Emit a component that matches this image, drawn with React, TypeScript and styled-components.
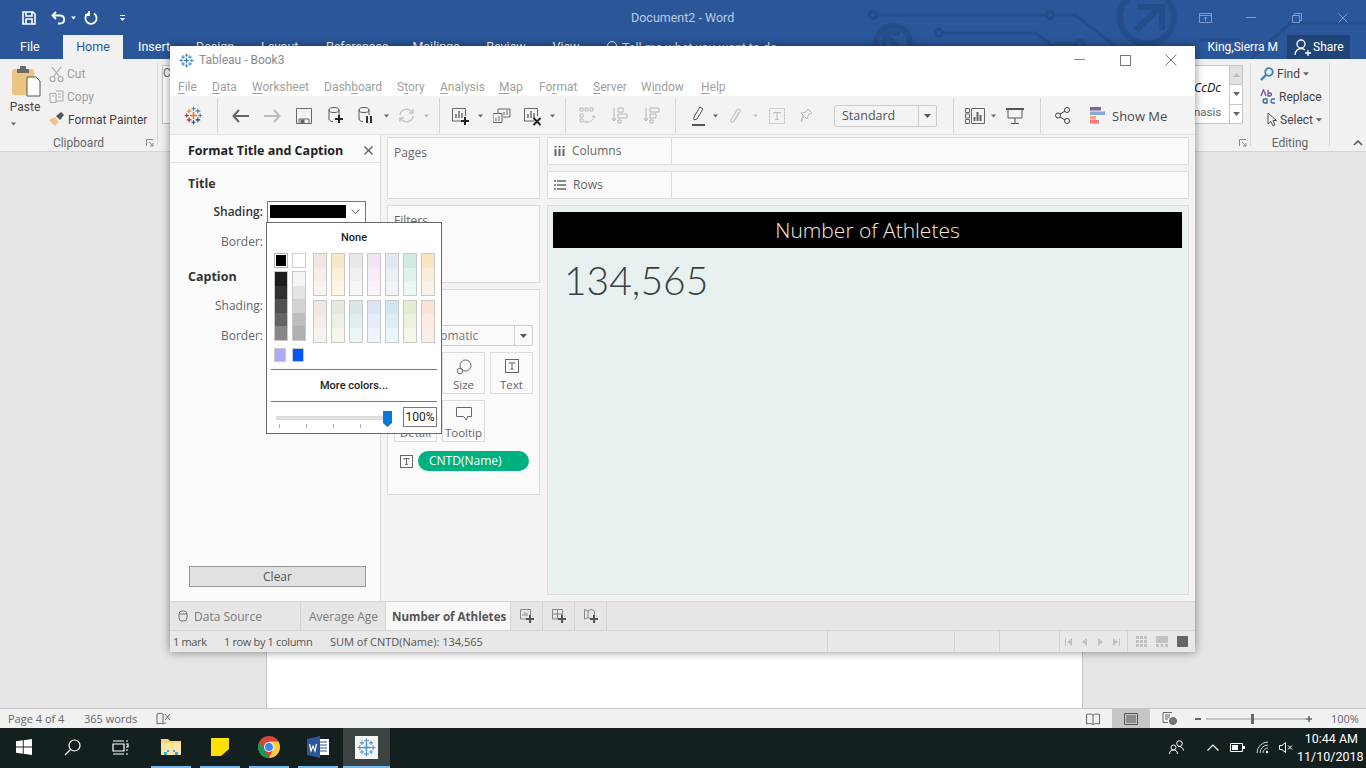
import React from 'react';
import styled, { createGlobalStyle } from 'styled-components';

const UI_FONT = '"Open Sans", "Liberation Sans", sans-serif';
const SEGOE_LIKE = 'Roboto, "Open Sans", sans-serif';

const GlobalStyle = createGlobalStyle`
  html, body {
    margin: 0;
    padding: 0;
    width: 1366px;
    height: 768px;
    overflow: hidden;
    background: #e6e6e6;
    font-family: ${UI_FONT};
  }
  * { box-sizing: border-box; }
`;

const Screen = styled.div`
  position: relative;
  width: 1366px;
  height: 768px;
  display: flex;
  flex-direction: column;
  overflow: hidden;
`;

const Svg = styled.svg`
  display: block;
  flex: none;
`;

/* ---------- word chrome ---------- */
const WordHead = styled.div`
  position: relative;
  flex: none;
  background: #2b579a;
  overflow: hidden;
`;
const WordTitleBar = styled.div`
  position: relative;
  height: 35px;
  display: flex;
  align-items: center;
  padding-left: 22px;
  color: #fff;
  font-family: ${SEGOE_LIKE};
`;
const CircuitArt = styled.svg`
  position: absolute;
  left: 0;
  top: 0;
`;
const Qat = styled.div`
  display: flex;
  align-items: center;
  width: 609px;
  height: 30px;
  flex: none;
`;
const DocTitle = styled.div`
  font-size: 12.5px;
  color: #bccbe2;
  margin-top: -1px;
`;
const WordControls = styled.div`
  margin-left: auto;
  display: flex;
  align-items: center;
`;
const WordControl = styled.div`
  width: 46px;
  display: flex;
  justify-content: center;
`;
const WordTabs = styled.div`
  position: relative;
  height: 24px;
  display: flex;
  align-items: stretch;
  font-family: ${SEGOE_LIKE};
  font-size: 12.5px;
  color: #fff;
  padding-left: 20px;
`;
const WordTab = styled.div<{ $w: number; $active?: boolean }>`
  width: ${p => p.$w}px;
  flex: none;
  text-align: center;
  line-height: 24px;
  background: ${p => (p.$active ? '#f1f1f1' : 'transparent')};
  color: ${p => (p.$active ? '#2b579a' : '#fff')};
`;
const TabSpacer = styled.div<{ $w: number }>`
  width: ${p => p.$w}px;
  flex: none;
`;
const TellMe = styled.div`
  display: flex;
  align-items: center;
  gap: 4px;
  white-space: nowrap;
  color: #dfe6f1;
`;
const WordUser = styled.div`
  margin-left: auto;
  line-height: 24px;
  padding-right: 9px;
  font-size: 12px;
`;
const ShareButton = styled.div`
  width: 63px;
  margin-right: 16px;
  background: #1f4478;
  display: flex;
  align-items: center;
  gap: 2px;
  padding-left: 7px;
  font-size: 12px;
`;
const Ribbon = styled.div`
  height: 93px;
  flex: none;
  background: #f1f1f1;
  border-bottom: 1px solid #d4d4d4;
  display: flex;
  color: #444;
  font-family: ${SEGOE_LIKE};
  font-size: 12px;
`;
const RibbonGroup = styled.div<{ $w?: number }>`
  position: relative;
  ${p => (p.$w ? `width: ${p.$w}px; flex: none;` : 'flex: 1;')}
  border-right: 1px solid #d8d8d8;
  margin: 4px 0 5px;
  display: flex;
`;
const GroupLabel = styled.div`
  position: absolute;
  left: 0;
  right: 0;
  bottom: -6px;
  text-align: center;
  color: #666;
  font-size: 12px;
  line-height: 18px;
`;
const Launcher = styled.div<{ $b?: number }>`
  position: absolute;
  right: 3px;
  bottom: ${p => p.$b ?? -1}px;
`;
const PasteColumn = styled.div`
  width: 49px;
  flex: none;
  padding: 3px 0 0 12px;
  color: #444;
`;
const PasteLabel = styled.div`
  margin: 0 0 0 -12px;
  width: 50px;
  text-align: center;
  line-height: 17px;
`;
const PasteCaret = styled.div`
  margin: 6px 0 0 -1px;
`;
const SmallCommands = styled.div`
  display: flex;
  flex-direction: column;
  margin-top: -1px;
`;
const SmallCommand = styled.div<{ $muted?: boolean }>`
  height: 23px;
  display: flex;
  align-items: center;
  gap: 3px;
  color: ${p => (p.$muted ? '#a0a0a0' : '#444')};
`;
const Gallery = styled.div`
  position: absolute;
  left: 4px;
  right: 7px;
  top: 2px;
  height: 59px;
  background: #fff;
  border: 1px solid #c6c6c6;
  color: #666;
`;
const GalleryRight = styled.div`
  position: absolute;
  right: 13px;
  top: 0;
  bottom: 0;
  width: 35px;
  text-align: left;
`;
const GalleryPreview = styled.div`
  font-family: ${UI_FONT};
  font-style: italic;
  font-size: 12.5px;
  color: #111;
  line-height: 18px;
  margin-top: 13px;
  width: 27px;
  white-space: nowrap;
  overflow: hidden;
`;
const GalleryName = styled.div`
  font-size: 11.5px;
  line-height: 16px;
  margin-top: 7px;
`;
const GalleryScroll = styled.div`
  position: absolute;
  right: 0;
  top: 0;
  bottom: 0;
  width: 13px;
  border-left: 1px solid #c6c6c6;
  display: flex;
  flex-direction: column;
`;
const ScrollCell = styled.div<{ $bg?: string }>`
  flex: 1;
  background: ${p => p.$bg || '#fff'};
  border-bottom: 1px solid #c6c6c6;
  display: flex;
  align-items: center;
  justify-content: center;
  &:last-child { border-bottom: 0; }
`;
const EditingStack = styled.div`
  display: flex;
  flex-direction: column;
  padding: 0 0 0 9px;
  margin-top: -1px;
`;
const RibbonEnd = styled.div`
  flex: none;
  width: 36px;
  position: relative;
`;
const DocArea = styled.div`
  flex: 1;
  background: #e6e6e6;
  padding-left: 266px;
`;
const Page = styled.div`
  width: 817px;
  height: 100%;
  background: #fff;
  border-left: 1px solid #c6c6c6;
  border-right: 1px solid #c6c6c6;
`;
const WordStatus = styled.div`
  height: 20px;
  flex: none;
  background: #f1f1f1;
  border-top: 1px solid #c6c6c6;
  display: flex;
  align-items: center;
  font-size: 11px;
  color: #666;
  padding-left: 8px;
`;
const StatusText = styled.div<{ $w: number }>`
  width: ${p => p.$w}px;
  flex: none;
`;
const ViewCell = styled.div<{ $active?: boolean; $w: number }>`
  width: ${p => p.$w}px;
  height: 100%;
  flex: none;
  display: flex;
  align-items: center;
  justify-content: center;
  background: ${p => (p.$active ? '#c6c6c6' : 'transparent')};
`;
const Zoom = styled.div`
  width: 117px;
  margin: 0 19px 0 7px;
  flex: none;
`;
const Taskbar = styled.div`
  height: 40px;
  flex: none;
  background: #14201f;
  display: flex;
  align-items: stretch;
  color: #fff;
`;
const TaskSlot = styled.div<{ $w: number; $open?: boolean; $active?: boolean }>`
  width: ${p => p.$w}px;
  flex: none;
  display: flex;
  align-items: center;
  justify-content: center;
  background: ${p => (p.$active ? '#3b4443' : 'transparent')};
  border-bottom: 2px solid ${p => (p.$open ? '#76b9ed' : 'transparent')};
`;
const TaskSpacer = styled.div`
  flex: 1;
`;
const Clock = styled.div`
  width: 69px;
  flex: none;
  font-family: ${SEGOE_LIKE};
  font-size: 12.5px;
  text-align: right;
  line-height: 18px;
  padding: 2px 8px 0 0;
  white-space: nowrap;
`;

/* ---------- tableau window ---------- */
const TableauWindow = styled.div`
  position: absolute;
  left: 170px;
  top: 46px;
  width: 1025px;
  height: 606px;
  background: #f3f3f3;
  box-shadow: 0 0 9px rgba(0, 0, 0, 0.45);
  display: flex;
  flex-direction: column;
  font-size: 12px;
  color: #555;
`;
const TbTitle = styled.div`
  height: 27px;
  flex: none;
  background: #fff;
  display: flex;
  align-items: center;
  padding: 1px 0 0 9px;
  gap: 5px;
  color: #8a8a8a;
  font-family: ${SEGOE_LIKE};
  font-size: 12px;
`;
const TbControls = styled.div`
  margin-left: auto;
  display: flex;
  align-items: center;
  padding-right: 1px;
`;
const TbControl = styled.div`
  width: 46px;
  display: flex;
  justify-content: center;
`;
const MenuBar = styled.div`
  height: 23px;
  flex: none;
  background: #fff;
  display: flex;
  align-items: center;
  padding: 4px 0 0 8px;
  color: #a0a0a0;
  font-family: ${SEGOE_LIKE};
  font-size: 12px;
`;
const MenuItem = styled.span<{ $w: number }>`
  width: ${p => p.$w}px;
  flex: none;
  u { text-underline-offset: 2px; }
`;
const Toolbar = styled.div`
  height: 39px;
  flex: none;
  display: flex;
  align-items: center;
  padding-top: 1px;
  background: #f3f3f3;
  border-bottom: 1px solid #e4e4e4;
`;
const Tool = styled.div<{ $w: number; $ml?: number }>`
  width: ${p => p.$w}px;
  margin-left: ${p => p.$ml || 0}px;
  flex: none;
  display: flex;
  align-items: center;
  justify-content: center;
`;
const ToolSep = styled.div<{ $ml?: number }>`
  width: 1px;
  height: 35px;
  flex: none;
  margin-left: ${p => p.$ml || 0}px;
  background: #d6d6d6;
`;
const StandardSelect = styled.div`
  width: 103px;
  height: 22px;
  margin-left: 14px;
  flex: none;
  border: 1px solid #ccc;
  border-radius: 2px;
  display: flex;
  align-items: center;
  padding-left: 7px;
  font-size: 12.5px;
  color: #555;
`;
const SelectCaret = styled.div`
  margin-left: auto;
  width: 18px;
  height: 100%;
  border-left: 1px solid #ccc;
  display: flex;
  align-items: center;
  justify-content: center;
`;
const ShowMe = styled.div`
  margin-left: 6px;
  font-size: 13px;
  color: #4a4a4a;
`;
const TbBody = styled.div`
  flex: 1;
  min-height: 0;
  position: relative;
  display: flex;
`;
const FormatPane = styled.div`
  width: 211px;
  flex: none;
  background: #fbfbfb;
  border-right: 1px solid #d9d9d9;
  display: flex;
  flex-direction: column;
  padding-bottom: 14px;
`;
const FormatHeader = styled.div`
  height: 28px;
  flex: none;
  border-bottom: 1px solid #e4e4e4;
  display: flex;
  align-items: center;
  justify-content: space-between;
  padding: 3px 7px 0 18px;
  font-size: 12.5px;
  font-weight: 700;
  color: #222;
`;
const SectionTitle = styled.div<{ $mt: number }>`
  margin: ${p => p.$mt}px 0 0 18px;
  font-size: 12.5px;
  font-weight: 700;
  line-height: 18px;
  color: #333;
`;
const FormatRow = styled.div<{ $mt: number }>`
  display: flex;
  align-items: center;
  margin-top: ${p => p.$mt}px;
  height: 21px;
`;
const FormatLabel = styled.div<{ $bold?: boolean }>`
  width: 93px;
  flex: none;
  text-align: right;
  font-weight: ${p => (p.$bold ? 600 : 400)};
  color: ${p => (p.$bold ? '#333' : '#666')};
`;
const ShadingSelect = styled.div`
  width: 99px;
  height: 22px;
  margin-left: 4px;
  background: #fff;
  border: 1px solid #777;
  display: flex;
  align-items: center;
  padding-left: 2px;
`;
const ShadingSwatch = styled.div`
  width: 76px;
  height: 13px;
  background: #000;
`;
const ChevronBox = styled.div`
  flex: 1;
  display: flex;
  justify-content: center;
`;
const ClearButton = styled.div`
  margin: auto 0 0 19px;
  width: 177px;
  height: 21px;
  background: #e1e1e1;
  border: 1px solid #999;
  text-align: center;
  line-height: 19px;
  color: #555;
`;
const ShelfColumn = styled.div`
  width: 153px;
  margin-left: 6px;
  flex: none;
  display: flex;
  flex-direction: column;
  gap: 6px;
  padding: 2px 0 0;
`;
const Card = styled.div<{ $h: number }>`
  height: ${p => p.$h}px;
  flex: none;
  background: #fafafa;
  border: 1px solid #dcdcdc;
  padding: 6px 6px;
  color: #666;
  position: relative;
`;
const CardTitle = styled.div`
  line-height: 18px;
`;
const MarkSelect = styled.div`
  margin-top: 11px;
  height: 21px;
  background: #fafafa;
  border: 1px solid #ccc;
  border-radius: 2px;
  display: flex;
  align-items: center;
  padding-left: 26px;
  color: #777;
`;
const MarkGrid = styled.div`
  display: grid;
  grid-template-columns: repeat(3, 43px);
  gap: 6px 5px;
  margin-top: 6px;
`;
const MarkButton = styled.div`
  height: 42px;
  border: 1px solid #dcdcdc;
  display: flex;
  flex-direction: column;
  align-items: center;
  justify-content: space-between;
  padding-top: 6px;
  font-size: 11.5px;
  line-height: 16px;
  color: #666;
`;
const PillRow = styled.div`
  display: flex;
  align-items: center;
  margin-top: 9px;
  padding-left: 6px;
  gap: 5px;
`;
const Pill = styled.div`
  width: 111px;
  height: 20px;
  border-radius: 10px;
  background: #00b180;
  color: #fff;
  line-height: 20px;
  padding-left: 11px;
  font-size: 12px;
`;
const ViewColumn = styled.div`
  flex: 1;
  min-width: 0;
  margin: 2px 6px 6px 7px;
  display: flex;
  flex-direction: column;
  gap: 6px;
`;
const ShelfBar = styled.div`
  height: 28px;
  flex: none;
  background: #fafafa;
  border: 1px solid #dcdcdc;
  display: flex;
  color: #666;
`;
const ShelfLabel = styled.div`
  width: 124px;
  flex: none;
  border-right: 1px solid #dcdcdc;
  display: flex;
  align-items: center;
  gap: 7px;
  padding: 0 0 1px 6px;
`;
const VizArea = styled.div`
  flex: 1;
  background: #e8f1ef;
  border: 1px solid #dcdcdc;
  padding: 6px 5px;
`;
const VizTitle = styled.div`
  height: 36px;
  width: 629px;
  background: #000;
  color: #f6ecdc;
  font-size: 21px;
  font-weight: 300;
  text-align: center;
  line-height: 37px;
`;
const BigNumber = styled.div`
  margin: 7px 0 0 11px;
  font-family: Lato, "Open Sans", sans-serif;
  font-size: 39px;
  font-weight: 300;
  color: #3a3f44;
  line-height: 50px;
`;
const SheetTabs = styled.div`
  height: 30px;
  flex: none;
  background: #e6e6e6;
  border-top: 1px solid #d6d6d6;
  border-bottom: 1px solid #d6d6d6;
  display: flex;
`;
const SheetTab = styled.div<{ $w: number; $active?: boolean }>`
  width: ${p => p.$w}px;
  flex: none;
  display: flex;
  align-items: center;
  gap: 6px;
  padding-left: ${p => (p.$active ? 6 : 8)}px;
  background: ${p => (p.$active ? '#f8f8f8' : 'transparent')};
  font-weight: ${p => (p.$active ? 700 : 400)};
  font-size: ${p => (p.$active ? 11.6 : 12)}px;
  color: ${p => (p.$active ? '#555' : '#7a7a7a')};
  border-right: 1px solid #d6d6d6;
  white-space: nowrap;
`;
const NewSheet = styled.div`
  width: 32px;
  flex: none;
  display: flex;
  align-items: center;
  justify-content: center;
  border-right: 1px solid #d6d6d6;
`;
const TbStatus = styled.div`
  height: 21px;
  flex: none;
  background: #e8e8e8;
  display: flex;
  align-items: center;
  font-size: 11px;
  color: #555;
  padding-left: 3px;
`;
const StatusCell = styled.div<{ $w: number }>`
  width: ${p => p.$w}px;
  height: 100%;
  flex: none;
  display: flex;
  align-items: center;
  border-right: 1px solid #d2d2d2;
`;
const StatusPlain = styled.div<{ $w: number; $tight?: boolean }>`
  width: ${p => p.$w}px;
  flex: none;
  letter-spacing: ${p => (p.$tight ? '-0.35px' : '0')};
`;
const PagerGroup = styled.div`
  width: 68px;
  height: 100%;
  flex: none;
  display: flex;
  align-items: center;
  justify-content: space-around;
  padding: 0 2px 0 0;
  border-right: 1px solid #d2d2d2;
`;
const FitGroup = styled.div`
  flex: 1;
  display: flex;
  align-items: center;
  justify-content: flex-start;
  gap: 9px;
  padding-left: 8px;
`;

/* ---------- colour popup ---------- */
const ColorPopup = styled.div`
  position: absolute;
  left: 96px;
  top: 87px;
  width: 176px;
  height: 212px;
  background: #fff;
  border: 1px solid #6a6a6a;
  display: flex;
  flex-direction: column;
  align-items: stretch;
  color: #222;
  font-family: ${SEGOE_LIKE};
  font-size: 11px;
  z-index: 5;
`;
const NoneLabel = styled.div`
  text-align: center;
  line-height: 16px;
  margin-top: 7px;
  font-weight: 500;
`;
const PaletteGrid = styled.div`
  display: flex;
  margin: 7px 0 0 7px;
`;
const GreyColumn = styled.div`
  width: 14px;
  display: flex;
  flex-direction: column;
  margin-right: 4px;
`;
const ColorChip = styled.div<{ $c: string; $selected?: boolean }>`
  width: 14px;
  height: 15px;
  background: ${p => p.$c};
  border: 1px solid ${p => (p.$selected ? '#b5b5b5' : '#d0d0d0')};
  box-shadow: ${p => (p.$selected ? 'inset 0 0 0 1px #fff' : 'none')};
`;
const Ramp = styled.div<{ $mt?: number }>`
  width: 14px;
  margin-top: ${p => p.$mt || 0}px;
  border: 1px solid #c9c9c9;
  display: flex;
  flex-direction: column;
`;
const RampStep = styled.div<{ $c: string; $h: number }>`
  height: ${p => p.$h}px;
  background: ${p => p.$c};
`;
const PaleBlock = styled.div`
  margin-left: 3px;
  display: flex;
  flex-direction: column;
  gap: 4px;
`;
const PaleRow = styled.div`
  display: flex;
  gap: 4px;
`;
const RecentRow = styled.div`
  display: flex;
  gap: 6px;
  margin: 5px 0 0 7px;
`;
const RecentChip = styled.div<{ $c: string }>`
  width: 12px;
  height: 14px;
  background: ${p => p.$c};
  border: 1px solid #c9c9c9;
`;
const PopupRule = styled.div<{ $mt: number }>`
  height: 1px;
  margin: ${p => p.$mt}px 4px 0;
  background: #777;
`;
const MoreColors = styled.div`
  text-align: center;
  line-height: 31px;
  font-weight: 500;
`;
const SliderRow = styled.div`
  position: relative;
  display: flex;
  align-items: center;
  height: 31px;
`;
const SliderTrack = styled.div`
  width: 112px;
  height: 4px;
  margin: 1px 0 0 9px;
  background: #e2e2e2;
  border: 1px solid #dadada;
`;
const SliderThumb = styled.svg`
  position: absolute;
  left: 116px;
  top: 9px;
`;
const SliderTicks = styled.svg`
  position: absolute;
  left: 12px;
  top: 22px;
`;
const OpacityBox = styled.div`
  margin-left: 15px;
  width: 34px;
  height: 20px;
  border: 1px solid #777;
  text-align: center;
  line-height: 18px;
  font-size: 12px;
`;

/* ---------- small drawings ---------- */
const Caret = ({ c = '#666', w = 7 }: { c?: string; w?: number }) => (
  <Svg width={w} height={4} viewBox="0 0 7 4"><path d="M0 0h7L3.5 4z" fill={c} /></Svg>
);

const TableauMark = ({ size, colored, c = '#3b7fb8' }: { size: number; colored?: boolean; c?: string }) => {
  const arm = [
    [12, 12, 4.4, colored ? '#e8762c' : c],
    [12, 3.5, 2.6, colored ? '#5b7fa6' : c],
    [12, 20.5, 2.6, colored ? '#1f4f82' : c],
    [3.5, 12, 2.6, colored ? '#c72037' : c],
    [20.5, 12, 2.6, colored ? '#5b879b' : c],
    [6.5, 6.5, 3, colored ? '#eb912b' : c],
    [17.5, 6.5, 3, colored ? '#59879b' : c],
    [6.5, 17.5, 3, colored ? '#c72037' : c],
    [17.5, 17.5, 3, colored ? '#1f457e' : c],
  ] as [number, number, number, string][];
  return (
    <Svg width={size} height={size} viewBox="0 0 24 24">
      {arm.map(([x, y, r, col], i) => (
        <path key={i} d={`M${x - r} ${y}H${x + r}M${x} ${y - r}V${y + r}`} stroke={col} strokeWidth={i === 0 ? 2 : 1.5} fill="none" />
      ))}
    </Svg>
  );
};

const Stroke = ({ w, h, vb, c = '#666', sw = 1, children }: { w: number; h: number; vb?: string; c?: string; sw?: number; children: React.ReactNode }) => (
  <Svg width={w} height={h} viewBox={vb || `0 0 ${w} ${h}`} fill="none" stroke={c} strokeWidth={sw}>{children}</Svg>
);

const Plus = ({ x, y, c = '#222' }: { x: number; y: number; c?: string }) => (
  <path d={`M${x - 4} ${y}h8M${x} ${y - 4}v8`} stroke={c} strokeWidth={2} />
);

const SheetIcon = ({ c = '#666', plus, cross }: { c?: string; plus?: boolean; cross?: boolean }) => (
  <Stroke w={20} h={20} c={c}>
    <path d="M12 15H2.5V2.5h13V10" />
    <path d="M6 12V8M9 12V5M12 12V7" strokeWidth={1.4} />
    {plus && <Plus x={15} y={15} />}
    {cross && <path d="M11.5 12l7 7M18.5 12l-7 7" stroke="#222" strokeWidth={2} />}
  </Stroke>
);

const TBox = ({ size = 14, c = '#666', dashed }: { size?: number; c?: string; dashed?: boolean }) => (
  <Stroke w={size} h={size} c={c}>
    <rect x=".5" y=".5" width={size - 1} height={size - 1} strokeDasharray={dashed ? '2 1' : undefined} />
    <path d={`M${size * 0.3} ${size * 0.35}v-1h${size * 0.4}v1M${size / 2} ${size * 0.3}v${size * 0.42}M${size * 0.38} ${size * 0.72}h${size * 0.24}`} />
  </Stroke>
);

const PALE_TOP = [
  ['#f1e6e0', '#f6eeea', '#f7f4f2'], ['#f8e9c6', '#fbf0d8', '#fdf6e6'], ['#e8e8e8', '#f0f0f0', '#f6f6f6'],
  ['#f3e4f3', '#f7ecf7', '#faf4fa'], ['#e0e9ef', '#eaeff3', '#f1f5f7'], ['#d0ebe6', '#e0f1ee', '#edf8f5'],
  ['#fae5c2', '#faeeda', '#f9f2e8'],
];
const PALE_BOTTOM = [
  ['#f2e6e2', '#f6ecea', '#faf2f0'], ['#e6eadb', '#edf0e4', '#f4f6ea'], ['#d8e6e6', '#e2eeee', '#eaf7f6'],
  ['#dde5f5', '#e6ecf8', '#eef3fc'], ['#cfe7f2', '#ddeff6', '#e8f5fa'], ['#e3eed0', '#ecf2dc', '#f4f7e8'],
  ['#fde3d3', '#fdeae0', '#faefe8'],
];
const DARKS = ['#1c1c1c', '#303030', '#505050', '#646464', '#868686'];
const LIGHTS = ['#f4f4f4', '#e4e4e4', '#d2d2d2', '#bdbdbd', '#b0b0b0'];

const MENU: [string, string, string, number][] = [
  ['', 'F', 'ile', 34], ['', 'D', 'ata', 40], ['', 'W', 'orksheet', 72], ['Dash', 'b', 'oard', 73],
  ['S', 't', 'ory', 43], ['', 'A', 'nalysis', 59], ['', 'M', 'ap', 40], ['Fo', 'r', 'mat', 54],
  ['', 'S', 'erver', 48], ['Wi', 'n', 'dow', 60], ['', 'H', 'elp', 40],
];

const ColorPicker = () => (
  <ColorPopup>
    <NoneLabel>None</NoneLabel>
    <PaletteGrid>
      <GreyColumn>
        <ColorChip $c="#000" $selected />
        <Ramp $mt={3}>{DARKS.map(c => <RampStep key={c} $c={c} $h={13.6} />)}</Ramp>
      </GreyColumn>
      <GreyColumn>
        <ColorChip $c="#fff" />
        <Ramp $mt={3}>{LIGHTS.map(c => <RampStep key={c} $c={c} $h={13.6} />)}</Ramp>
      </GreyColumn>
      <PaleBlock>
        {[PALE_TOP, PALE_BOTTOM].map((rows, r) => (
          <PaleRow key={r}>
            {rows.map((steps, i) => (
              <Ramp key={i}>{steps.map(c => <RampStep key={c} $c={c} $h={13.6} />)}</Ramp>
            ))}
          </PaleRow>
        ))}
      </PaleBlock>
    </PaletteGrid>
    <RecentRow>
      <RecentChip $c="#aaaaff" />
      <RecentChip $c="#0055ff" />
    </RecentRow>
    <PopupRule $mt={7} />
    <MoreColors>More colors...</MoreColors>
    <PopupRule $mt={0} />
    <SliderRow>
      <SliderTrack />
      <SliderTicks width={90} height={6}>
        {[0, 27, 54, 81].map(x => <rect key={x} x={x} y={0} width={1} height={4} fill="#aaa" />)}
      </SliderTicks>
      <SliderThumb width={9} height={16} viewBox="0 0 9 16"><path d="M0 0h9v12l-4.5 4L0 12z" fill="#0a78d7" /></SliderThumb>
      <OpacityBox>100%</OpacityBox>
    </SliderRow>
  </ColorPopup>
);

function TableauMarkInner() {
  return (
    <g fill="none" stroke="#5b93c4" strokeWidth={1.3}>
      <path d="M7 12h10M12 7v10" stroke="#4a90c8" strokeWidth={1.8} />
      <path d="M9 4h6M12 1v6M9 20h6M12 17v6M1 12h6M4 9v6M17 12h6M20 9v6M4 6.5h5M6.5 4v5M15 6.5h5M17.5 4v5M4 17.5h5M6.5 15v5M15 17.5h5M17.5 15v5" />
    </g>
  );
}

const WordChrome = () => (
  <>
    <WordHead>
      <CircuitArt width={1366} height={59} viewBox="0 0 1366 59" fill="none" stroke="#254d8b" strokeWidth={3}>
        <circle cx="873" cy="15" r="3.5" />
        <circle cx="1050" cy="15" r="3.5" />
        <path d="M877 15h170M1054 15h21l60 46" />
        <circle cx="939" cy="33" r="3.5" />
        <circle cx="1080" cy="44" r="3.5" />
        <path d="M943 33h93l18 14M1054 44h22" />
        <circle cx="893" cy="43" r="17" strokeWidth={6} />
        <path d="M884 33l18 18M884 49V33h16" strokeWidth={5} />
        <circle cx="1147" cy="17" r="27" strokeWidth={6} />
        <path d="M1136 30l25-24M1137 7h25v23" strokeWidth={6} />
        <path d="M1250 60l40-37h76M1200 40h40" />
      </CircuitArt>
      <WordTitleBar>
        <Qat>
          <Stroke w={14} h={14} c="#fff" sw={1.6}>
            <path d="M1 1h10l2 2v10H1z" /><path d="M4 1v4h6V1M4 13V8h6v5" />
          </Stroke>
          <TabSpacer $w={15} />
          <Stroke w={15} h={14} c="#fff" sw={1.8}><path d="M5 1L1.5 4.5 5 8M2 4.5h7c5.5 0 5.5 8 0 8H7" /></Stroke>
          <TabSpacer $w={5} />
          <Caret c="#fff" w={5} />
          <TabSpacer $w={8} />
          <Stroke w={14} h={14} c="#fff" sw={1.8}><path d="M10 2.5a5.6 5.6 0 1 1-6 0M5 0v4H1" /></Stroke>
          <TabSpacer $w={21} />
          <Stroke w={7} h={7} c="#fff"><path d="M1 1.5h5" /><path d="M1 4h5L3.5 7z" fill="#fff" stroke="none" /></Stroke>
        </Qat>
        <DocTitle>Document2 - Word</DocTitle>
        <WordControls>
          <WordControl>
            <Stroke w={13} h={10} c="#7f9ccb"><path d="M.5.5h12v9H.5zM.5 2.5h12M6.5 8V4M5 5.5L6.5 4 8 5.5" /></Stroke>
          </WordControl>
          <WordControl>
            <Stroke w={10} h={2} c="#7f9ccb"><path d="M0 .5h10" /></Stroke>
          </WordControl>
          <WordControl>
            <Stroke w={10} h={10} c="#7f9ccb"><path d="M.5 2.5h7v7h-7zM2.5 2.5v-2h7v7h-2" /></Stroke>
          </WordControl>
          <WordControl>
            <Stroke w={10} h={10} c="#7f9ccb"><path d="M.5.5l9 9M9.5.5l-9 9" /></Stroke>
          </WordControl>
        </WordControls>
      </WordTitleBar>
      <WordTabs>
        <WordTab $w={18}>File</WordTab>
        <TabSpacer $w={25} />
        <WordTab $w={60} $active>Home</WordTab>
        <TabSpacer $w={15} />
        <WordTab $w={32}>Insert</WordTab>
        <TabSpacer $w={26} />
        <WordTab $w={37}>Design</WordTab>
        <TabSpacer $w={28} />
        <WordTab $w={37}>Layout</WordTab>
        <TabSpacer $w={28} />
        <WordTab $w={60}>References</WordTab>
        <TabSpacer $w={26} />
        <WordTab $w={48}>Mailings</WordTab>
        <TabSpacer $w={26} />
        <WordTab $w={40}>Review</WordTab>
        <TabSpacer $w={26} />
        <WordTab $w={28}>View</WordTab>
        <TabSpacer $w={26} />
        <TellMe>
          <Stroke w={12} h={12} c="#fff"><circle cx="6" cy="5" r="4.5" /><path d="M3 9l-2 3" /></Stroke>
          Tell me what you want to do
        </TellMe>
        <WordUser>King,Sierra M</WordUser>
        <ShareButton>
          <Stroke w={17} h={17} c="#fff" sw={1.3}><circle cx="7" cy="5" r="4" /><path d="M1 16c0-4 3-6.5 6-6.5 2 0 3 .5 4 1.5M11 14h6M14 11v6" /></Stroke>
          Share
        </ShareButton>
      </WordTabs>
    </WordHead>
    <Ribbon>
      <RibbonGroup $w={158}>
        <PasteColumn>
          <Svg width={29} height={33} viewBox="0 0 29 33">
            <rect x="0" y="3" width="22" height="26" rx="2" fill="#ecc57f" />
            <path d="M8 3h6V0H8zM5 3h12v4H5z" fill="#6a6a6a" />
            <path d="M15 11h9l4 4v15H15z" fill="#fff" stroke="#555" />
          </Svg>
          <PasteLabel>Paste</PasteLabel>
          <PasteCaret><Caret c="#666" w={5} /></PasteCaret>
        </PasteColumn>
        <SmallCommands>
          <SmallCommand $muted>
            <Stroke w={15} h={16} c="#a8a8a8" sw={1.2}><path d="M3 1l7 9M12 1L5 10" /><circle cx="3.5" cy="13" r="2.5" /><circle cx="11.5" cy="13" r="2.5" /></Stroke>
            Cut
          </SmallCommand>
          <SmallCommand $muted>
            <Stroke w={15} h={14} c="#a8a8a8"><path d="M7 3.5H1v9h6zM7 1h7v10H7M3 6h2M9 4h3M9 7h3" /></Stroke>
            Copy
          </SmallCommand>
          <SmallCommand>
            <Svg width={16} height={15} viewBox="0 0 16 15"><path d="M0 8l6-3 4 5-4 4z" fill="#e9c98a" /><path d="M7 4l5-4 3 3-4 5z" fill="#555" /></Svg>
            Format Painter
          </SmallCommand>
        </SmallCommands>
        <GroupLabel>Clipboard</GroupLabel>
        <Launcher>
          <Stroke w={8} h={8} c="#888"><path d="M.5 7V.5H7M3 3l4 4M7 4v3H4" /></Stroke>
        </Launcher>
      </RibbonGroup>
      <RibbonGroup>
        <Gallery>
          C
          <GalleryRight>
            <GalleryPreview>CcDc</GalleryPreview>
            <GalleryName>nasis</GalleryName>
          </GalleryRight>
          <GalleryScroll>
            <ScrollCell $bg="#e1e1e1">
              <Svg width={7} height={4} viewBox="0 0 7 4"><path d="M0 4h7L3.5 0z" fill="#bbb" /></Svg>
            </ScrollCell>
            <ScrollCell><Caret c="#666" /></ScrollCell>
            <ScrollCell><Caret c="#666" /></ScrollCell>
          </GalleryScroll>
        </Gallery>
        <Launcher>
          <Stroke w={8} h={8} c="#888"><path d="M.5 7V.5H7M3 3l4 4M7 4v3H4" /></Stroke>
        </Launcher>
      </RibbonGroup>
      <RibbonGroup $w={79}>
        <EditingStack>
          <SmallCommand>
            <Stroke w={14} h={14} c="#3f7fbf" sw={1.8}><circle cx="9" cy="5" r="3.8" /><path d="M6 8l-5 5" strokeWidth={2.4} /></Stroke>
            Find <Caret c="#666" w={6} />
          </SmallCommand>
          <SmallCommand>
            <Svg width={16} height={16} viewBox="0 0 16 16">
              <path d="M1 7l2.5-6L6 7" fill="none" stroke="#7b4fa0" strokeWidth={1.3} />
              <path d="M8 1v6h2a1.5 1.5 0 0 0 0-3H8" fill="none" stroke="#7b4fa0" strokeWidth={1.3} />
              <path d="M5 10a2 2 0 1 0 0 4h2v-4zM15 10h-2a2 2 0 0 0 0 4h2" fill="none" stroke="#2f6ea8" strokeWidth={1.3} />
            </Svg>
            Replace
          </SmallCommand>
          <SmallCommand>
            <TabSpacer $w={4} />
            <Stroke w={10} h={15} c="#555"><path d="M1 1v11l3-2.5 2 4.5 2-1-2-4.5h3.5z" /></Stroke>
            Select <Caret c="#666" w={6} />
          </SmallCommand>
        </EditingStack>
        <GroupLabel>Editing</GroupLabel>
      </RibbonGroup>
      <RibbonEnd>
        <Launcher $b={5}>
          <Stroke w={10} h={6} c="#555" sw={1.6}><path d="M1 5l4-4 4 4" /></Stroke>
        </Launcher>
      </RibbonEnd>
    </Ribbon>
    <DocArea><Page /></DocArea>
    <WordStatus>
      <StatusText $w={76}>Page 4 of 4</StatusText>
      <StatusText $w={72}>365 words</StatusText>
      <Stroke w={15} h={14} c="#666"><path d="M7 2C5 1 3 1 1 2v10c2-1 4-1 6 0 1-.8 2-1 3-1M7 2v10M9 2l5 6M14 2l-5 6" /></Stroke>
      <TaskSpacer />
      <ViewCell $w={38}>
        <Stroke w={14} h={12} c="#666"><path d="M7 2C5 .8 3 .8 .5 1.5V11C3 10.3 5 10.3 7 11.5c2-1.2 4-1.2 6.5-.5V1.5C11 .8 9 .8 7 2zM7 2v9.5" /></Stroke>
      </ViewCell>
      <ViewCell $w={38} $active>
        <Stroke w={14} h={12} c="#555"><path d="M.5.5h13v11H.5zM2 3h10M2 5h10M2 7h10M2 9h10" /></Stroke>
      </ViewCell>
      <ViewCell $w={38}>
        <Stroke w={15} h={13} c="#666"><path d="M10 .5H1v10h5M3 3h5M3 5h5M3 7h3" /><circle cx="11" cy="9" r="3.5" fill="#777" /></Stroke>
      </ViewCell>
      <Zoom>
        <Svg width={117} height={12} viewBox="0 0 117 12">
          <path d="M0 6h6" stroke="#666" strokeWidth={2} />
          <path d="M11 6h100" stroke="#999" />
          <rect x="56" y="1" width="3" height="10" fill="#666" />
          <path d="M111 6h6M114 3v6" stroke="#666" strokeWidth={1.6} />
        </Svg>
      </Zoom>
      <StatusText $w={35}>100%</StatusText>
    </WordStatus>
    <Taskbar>
      <TaskSlot $w={48}>
        <Svg width={16} height={16} viewBox="0 0 16 16"><path d="M0 2.3L6.8 1.3V7.5H0zM7.7 1.2L16 0V7.5H7.7zM0 8.4H6.8V14.7L0 13.7zM7.7 8.4H16V16L7.7 14.8z" fill="#fff" /></Svg>
      </TaskSlot>
      <TaskSlot $w={48}>
        <Stroke w={17} h={17} c="#fff" sw={1.2}><circle cx="10.5" cy="6.5" r="5.5" /><path d="M6.5 10.5L1 16" /></Stroke>
      </TaskSlot>
      <TaskSlot $w={48}>
        <Stroke w={17} h={15} c="#fff" sw={1.2}><path d="M1 4h11v7H1zM1 1h11M1 14h11M14 4h2v3h-2M14 1h2M14 14h2M14 10h2" /></Stroke>
      </TaskSlot>
      <TaskSlot $w={7} />
      <TaskSlot $w={40} $open>
        <Svg width={22} height={18} viewBox="0 0 22 18">
          <path d="M1 1h7l2 2h11v14H1z" fill="#f6d675" />
          <path d="M1 5h20v12H1z" fill="#fbe6a4" />
          <path d="M7 12h8v5H7zM4 17h14v-3H4z" fill="#3fa9dc" />
          <path d="M9 12h4v3H9z" fill="#fbe6a4" />
        </Svg>
      </TaskSlot>
      <TaskSlot $w={9} />
      <TaskSlot $w={40} $open>
        <Svg width={18} height={18} viewBox="0 0 18 18"><path d="M0 0h18v18H0z" fill="#ffe100" /><path d="M10 18l8-7v7z" fill="#222" /></Svg>
      </TaskSlot>
      <TaskSlot $w={9} />
      <TaskSlot $w={40} $open>
        <Svg width={22} height={22} viewBox="0 0 22 22">
          <circle cx="11" cy="11" r="11" fill="#db4437" />
          <path d="M11 22a11 11 0 0 1-9.5-16.5L6.5 14l4.5 8z" fill="#0f9d58" />
          <path d="M11 22a11 11 0 0 0 9.5-16.5H11l4 8z" fill="#ffcd40" />
          <circle cx="11" cy="11" r="5" fill="#fff" />
          <circle cx="11" cy="11" r="4" fill="#4285f4" />
        </Svg>
      </TaskSlot>
      <TaskSlot $w={9} />
      <TaskSlot $w={40} $open>
        <Svg width={22} height={22} viewBox="0 0 22 22">
          <path d="M9 3h13v16H9z" fill="#fff" />
          <path d="M13 6h7M13 9h7M13 12h7M13 15h7" stroke="#2b579a" />
          <path d="M0 3l13-3v22L0 19z" fill="#2b579a" />
          <path d="M2.5 8L4 15l2-5 2 5 1.5-7" stroke="#fff" fill="none" strokeWidth={1.2} />
        </Svg>
      </TaskSlot>
      <TaskSlot $w={5} />
      <TaskSlot $w={47} $open $active>
        <Svg width={23} height={23} viewBox="0 0 23 23">
          <rect width="23" height="23" fill="#f3f5f7" />
          <g transform="translate(1.5 1.5) scale(.83)"><TableauMarkInner /></g>
        </Svg>
      </TaskSlot>
      <TaskSpacer />
      <TaskSlot $w={28}>
        <Stroke w={15} h={15} c="#fff"><circle cx="10.5" cy="3.5" r="2.8" /><circle cx="4.5" cy="7.5" r="2.5" /><path d="M.5 14c0-3 2-4 4-4s4 1 4 4M9 6.5c3 0 5 1 5.5 4" /></Stroke>
      </TaskSlot>
      <TaskSlot $w={11} />
      <TaskSlot $w={24}>
        <Stroke w={12} h={7} c="#fff" sw={1.2}><path d="M.5 6.5L6 1l5.5 5.500" /></Stroke>
      </TaskSlot>
      <TaskSlot $w={24}>
        <Svg width={15} height={9} viewBox="0 0 15 9"><path d="M.5.5h12v8H.5z" fill="none" stroke="#fff" /><path d="M2 2h6v5H2zM13 3h2v3h-2z" fill="#fff" /></Svg>
      </TaskSlot>
      <TaskSlot $w={26}>
        <Stroke w={13} h={13} c="#cfd3d3"><path d="M1 12A11 11 0 0 1 12 1M4 12a8 8 0 0 1 8-8M7 12a5 5 0 0 1 5-5" /><circle cx="11" cy="11" r="1.2" fill="#fff" stroke="none" /></Stroke>
      </TaskSlot>
      <TaskSlot $w={22}>
        <Stroke w={14} h={11} c="#fff"><path d="M.5 3.5H3L6.5.5v10L3 7.5H.5zM9 3.5l4 4M13 3.500l-4 4" /></Stroke>
      </TaskSlot>
      <Clock>10:44 AM<br />11/10/2018</Clock>
    </Taskbar>
  </>
);

const TableauApp = () => (
  <TableauWindow>
    <TbTitle>
      <TableauMark size={15} />
      Tableau - Book3
      <TbControls>
        <TbControl><Stroke w={11} h={2} c="#888"><path d="M0 .5h11" /></Stroke></TbControl>
        <TbControl><Stroke w={11} h={11} c="#777"><rect x=".5" y=".5" width="10" height="10" /></Stroke></TbControl>
        <TbControl><Stroke w={12} h={12} c="#777"><path d="M.5.5l11 11M11.5.5l-11 11" /></Stroke></TbControl>
      </TbControls>
    </TbTitle>
    <MenuBar>
      {MENU.map(([a, u, b, w]) => (
        <MenuItem key={a + u + b} $w={w}>{a}<u>{u}</u>{b}</MenuItem>
      ))}
    </MenuBar>
    <Toolbar>
      <Tool $w={47}><TableauMark size={19} colored /></Tool>
      <ToolSep />
      <Tool $w={32} $ml={6}>
        <Stroke w={17} h={14} c="#666" sw={2}><path d="M7 1L1.5 7 7 13M2 7h15" /></Stroke>
      </Tool>
      <Tool $w={32}>
        <Stroke w={17} h={14} c="#bbb" sw={2}><path d="M10 1l5.5 6L10 13M15 7H0" /></Stroke>
      </Tool>
      <Tool $w={32}>
        <Stroke w={16} h={16} c="#666"><path d="M.5.5h15v15H.5zM3 15v-4h10v4" /><rect x="5" y="12" width="3" height="3" fill="#666" /></Stroke>
      </Tool>
      <Tool $w={32}>
        <Stroke w={16} h={17} c="#555">
          <ellipse cx="6" cy="3" rx="5" ry="2.5" /><path d="M1 3v9c0 1.5 2 2.5 4 2.5M11 3v6" /><Plus x={11} y={12} />
        </Stroke>
      </Tool>
      <Tool $w={28}>
        <Stroke w={16} h={17} c="#555">
          <ellipse cx="6" cy="3" rx="5" ry="2.5" /><path d="M1 3v9c0 1.5 2 2.5 4 2.5M11 3v5" />
          <path d="M9 9v7M13 9v7" stroke="#333" strokeWidth={2} />
        </Stroke>
      </Tool>
      <Tool $w={12}><Caret w={5} /></Tool>
      <Tool $w={28}>
        <Stroke w={17} h={15} c="#c4c4c4" sw={1.4}><path d="M2 7a6.5 6.5 0 0 1 11-4l2 2M15 8a6.5 6.5 0 0 1-11 4l-2-2M15 1v4h-4M2 14v-4h4" /></Stroke>
      </Tool>
      <Tool $w={12}><Caret c="#bbb" w={5} /></Tool>
      <ToolSep $ml={7} />
      <Tool $w={28} $ml={6}><SheetIcon plus /></Tool>
      <Tool $w={12}><Caret w={5} /></Tool>
      <Tool $w={28} $ml={2}>
        <Stroke w={18} h={16} c="#666"><path d="M5 5V1h12v8h-7M0 5.5h9v9H0zM11 7V4M14 7V2M3 13v-3M6 13V8" /></Stroke>
      </Tool>
      <Tool $w={28} $ml={2}><SheetIcon cross /></Tool>
      <Tool $w={12}><Caret w={5} /></Tool>
      <ToolSep $ml={7} />
      <Tool $w={28} $ml={7}>
        <Stroke w={17} h={18} c="#bbb"><path d="M1 1h3v3H1zM6 1h3v3H6zM11 1h3v3h-3zM1 7h3v3H1zM1 12h3v3H1zM7 15c4 1 8-2 8-6M5 14l2 1.5 1-2M13 10l2-1.5 1.5 2" /></Stroke>
      </Tool>
      <Tool $w={28} $ml={4}>
        <Stroke w={17} h={17} c="#b4b4b4"><path d="M3 1v12M1 11l2 3 2-3M7 1h5v4H7zM7 7h9v4H7zM7 13h3v3H7z" /></Stroke>
      </Tool>
      <Tool $w={28} $ml={4}>
        <Stroke w={17} h={17} c="#b4b4b4"><path d="M3 1v12M1 11l2 3 2-3M7 1h9v4H7zM7 7h6v4H7zM7 13h3v3H7z" /></Stroke>
      </Tool>
      <ToolSep $ml={10} />
      <Tool $w={28} $ml={8}>
        <Stroke w={13} h={20} c="#555"><path d="M8 1l3 2-6 10-3 1 0-3z" /><path d="M0 19h13" strokeWidth={2} /></Stroke>
      </Tool>
      <Tool $w={6}><Caret w={5} /></Tool>
      <Tool $w={28} $ml={3}>
        <Stroke w={13} h={18} c="#c4c4c4" sw={1.2}><path d="M10 5L5 14c-1 2-4 1-3-1L8 3c1.500-2 4-.5 3 1.500L6 13" /></Stroke>
      </Tool>
      <Tool $w={12}><Caret c="#c4c4c4" w={5} /></Tool>
      <Tool $w={28} $ml={2}><TBox size={16} c="#bbb" dashed /></Tool>
      <Tool $w={28} $ml={1}>
        <Stroke w={13} h={16} c="#bbb"><path d="M8 1l4 4-3 1-2 5-3-3-3 6 2-7-2-2 5-1z" /></Stroke>
      </Tool>
      <StandardSelect>
        Standard
        <SelectCaret><Caret w={7} c="#555" /></SelectCaret>
      </StandardSelect>
      <ToolSep $ml={16} />
      <Tool $w={28} $ml={7}>
        <Stroke w={20} h={16} c="#666"><path d="M.5.5h4v4h-4zM.5 6h4v4h-4zM.5 11.5h4v4h-4zM6.5.5h13v15h-13z" /><path d="M9.5 13V9M12.5 13V4M15.500 13V7" strokeWidth={2} /></Stroke>
      </Tool>
      <Tool $w={8}><Caret w={5} /></Tool>
      <Tool $w={28} $ml={4}>
        <Stroke w={18} h={16} c="#555"><path d="M0 1h18" strokeWidth={2} /><path d="M2 1v9h14V1M9 10v5M5 15.5h8" /></Stroke>
      </Tool>
      <ToolSep $ml={11} />
      <Tool $w={28} $ml={7}>
        <Stroke w={15} h={17} c="#444"><circle cx="3" cy="8.5" r="2.5" /><circle cx="12" cy="3" r="2.5" /><circle cx="12" cy="14" r="2.5" /><path d="M5 7l5-3M5 10l5 3" /></Stroke>
      </Tool>
      <Tool $w={16} $ml={14}>
        <Svg width={16} height={17} viewBox="0 0 16 17">
          <rect y="0" width="11" height="3.5" fill="#7b6699" />
          <rect y="4.5" width="15" height="3.5" fill="#86a9cf" />
          <rect y="9" width="6" height="3.5" fill="#f2a77b" />
          <rect y="13" width="9" height="3.5" fill="#f1798a" />
        </Svg>
      </Tool>
      <ShowMe>Show Me</ShowMe>
    </Toolbar>
    <TbBody>
      <FormatPane>
        <FormatHeader>
          Format Title and Caption
          <Stroke w={9} h={9} c="#555" sw={1.2}><path d="M.5.5l8 8M8.5.5l-8 8" /></Stroke>
        </FormatHeader>
        <SectionTitle $mt={12}>Title</SectionTitle>
        <FormatRow $mt={8}>
          <FormatLabel $bold>Shading:</FormatLabel>
          <ShadingSelect>
            <ShadingSwatch />
            <ChevronBox><Stroke w={9} h={5} c="#555"><path d="M.5.5l4 4 4-4" /></Stroke></ChevronBox>
          </ShadingSelect>
        </FormatRow>
        <FormatRow $mt={9}>
          <FormatLabel>Border:</FormatLabel>
        </FormatRow>
        <SectionTitle $mt={16}>Caption</SectionTitle>
        <FormatRow $mt={9}>
          <FormatLabel>Shading:</FormatLabel>
        </FormatRow>
        <FormatRow $mt={9}>
          <FormatLabel>Border:</FormatLabel>
        </FormatRow>
        <ClearButton>Clear</ClearButton>
      </FormatPane>
      <ShelfColumn>
        <Card $h={62}><CardTitle>Pages</CardTitle></Card>
        <Card $h={78}><CardTitle>Filters</CardTitle></Card>
        <Card $h={206}>
          <CardTitle>Marks</CardTitle>
          <MarkSelect>
            Automatic
            <SelectCaret><Caret w={7} c="#555" /></SelectCaret>
          </MarkSelect>
          <MarkGrid>
            <MarkButton><span />Color</MarkButton>
            <MarkButton>
              <Stroke w={16} h={16} c="#666"><circle cx="9.5" cy="6.5" r="5.5" /><circle cx="4" cy="12" r="2.8" /></Stroke>
              Size
            </MarkButton>
            <MarkButton>
              <TBox size={14} />
              Text
            </MarkButton>
            <MarkButton><span />Detail</MarkButton>
            <MarkButton>
              <Stroke w={16} h={14} c="#666"><path d="M.5.5h15v9h-4l-1 3.5-3-3.5h-7z" /></Stroke>
              Tooltip
            </MarkButton>
          </MarkGrid>
          <PillRow>
            <TBox size={13} />
            <Pill>CNTD(Name)</Pill>
          </PillRow>
        </Card>
      </ShelfColumn>
      <ViewColumn>
        <ShelfBar>
          <ShelfLabel>
            <Stroke w={11} h={11} c="#666" sw={2}><path d="M1.5 11V4M5.5 11V4M9.5 11V4" /><path d="M1.5 2.5V1M5.5 2.5V1M9.5 2.5V1" /></Stroke>
            Columns
          </ShelfLabel>
        </ShelfBar>
        <ShelfBar>
          <ShelfLabel>
            <Stroke w={12} h={10} c="#666" sw={1.6}><path d="M3 1h9M3 5h9M3 9h9" /><path d="M0 1h2M0 5h2M0 9h2" /></Stroke>
            Rows
          </ShelfLabel>
        </ShelfBar>
        <VizArea>
          <VizTitle>Number of Athletes</VizTitle>
          <BigNumber>134,565</BigNumber>
        </VizArea>
      </ViewColumn>
      <ColorPicker />
    </TbBody>
    <SheetTabs>
      <SheetTab $w={131}>
        <Stroke w={10} h={12} c="#777"><rect x="1" y="1" width="8" height="10" rx="3" /><path d="M1 4h8" /></Stroke>
        Data Source
      </SheetTab>
      <SheetTab $w={85}>Average Age</SheetTab>
      <SheetTab $w={125} $active>Number of Athletes</SheetTab>
      <NewSheet>
        <Stroke w={14} h={15} c="#888"><path d="M8 10H.5V.5h10V6M3 7V5M5 7V3M7 7V4" /><Plus x={10} y={10} c="#555" /></Stroke>
      </NewSheet>
      <NewSheet>
        <Stroke w={14} h={15} c="#888"><path d="M8 10H.5V.5h10V6M5.5.5v9M.5 5h10" /><Plus x={10} y={10} c="#555" /></Stroke>
      </NewSheet>
      <NewSheet>
        <Stroke w={14} h={15} c="#888"><path d="M7 10L4 8.5.5 10V.5L4 2l3-1.5L10.500 2v4M4 2v6" /><Plus x={10} y={10} c="#555" /></Stroke>
      </NewSheet>
    </SheetTabs>
    <TbStatus>
      <StatusPlain $w={51} $tight>1 mark</StatusPlain>
      <StatusPlain $w={106} $tight>1 row by 1 column</StatusPlain>
      <StatusCell $w={498}>SUM of CNTD(Name): 134,565</StatusCell>
      <StatusCell $w={127} />
      <StatusCell $w={45} />
      <StatusCell $w={60} />
      <PagerGroup>
        <Svg width={7} height={8} viewBox="0 0 7 8"><path d="M0 0h1v8H0zM7 0v8L2 4z" fill="#c2c2c2" /></Svg>
        <Svg width={5} height={8} viewBox="0 0 5 8"><path d="M5 0v8L0 4z" fill="#c2c2c2" /></Svg>
        <Svg width={5} height={8} viewBox="0 0 5 8"><path d="M0 0v8l5-4z" fill="#c2c2c2" /></Svg>
        <Svg width={7} height={8} viewBox="0 0 7 8"><path d="M7 0H6v8h1zM0 0v8l5-4z" fill="#c2c2c2" /></Svg>
      </PagerGroup>
      <FitGroup>
        <Svg width={11} height={11} viewBox="0 0 11 11" fill="#c2c2c2">
          {[0, 4, 8].flatMap(x => [0, 4, 8].map(y => <rect key={`${x}${y}`} x={x} y={y} width={3} height={3} />))}
        </Svg>
        <Svg width={12} height={11} viewBox="0 0 12 11" fill="#c2c2c2"><rect width="12" height="7" /><rect y="8" width="3" height="3" /><rect x="4.5" y="8" width="3" height="3" /><rect x="9" y="8" width="3" height="3" /></Svg>
        <Svg width={11} height={11} viewBox="0 0 11 11"><rect width="11" height="11" fill="#666" /></Svg>
      </FitGroup>
    </TbStatus>
  </TableauWindow>
);

export default function App() {
  return (
    <Screen>
      <GlobalStyle />
      <WordChrome />
      <TableauApp />
    </Screen>
  );
}
